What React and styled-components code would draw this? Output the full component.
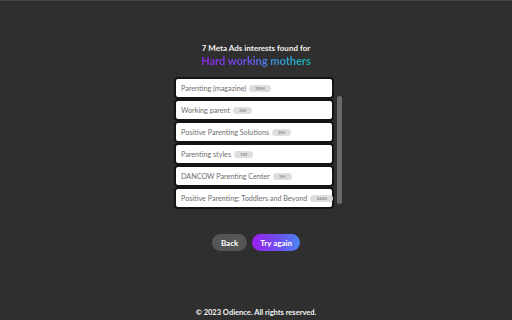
import React from 'react';
import styled, { createGlobalStyle } from 'styled-components';

const GlobalStyle = createGlobalStyle`
  html, body {
    margin: 0;
    padding: 0;
    background: #2f2f2f;
  }
  body {
    font-family: 'Lato', 'Liberation Sans', sans-serif;
  }
`;

const Page = styled.div`
  height: 320px;
  display: flex;
  flex-direction: column;
  align-items: center;
  border-top: 1px solid #454545;
  box-sizing: border-box;
`;

const Content = styled.main`
  flex: 1;
  display: flex;
  flex-direction: column;
  align-items: center;
  padding-top: 42px;
`;

const Subtitle = styled.div`
  color: #f2f2f2;
  font-size: 8px;
  font-weight: 700;
  line-height: 10px;
`;

const Title = styled.h1`
  margin: 0;
  font-size: 11px;
  line-height: 15px;
  font-weight: 700;
  background: linear-gradient(90deg, #8c22e6 0%, #6a4ce8 40%, #3f8ee0 65%, #17b9b0 100%);
  -webkit-background-clip: text;
  background-clip: text;
  color: transparent;
`;

const ListArea = styled.div`
  display: flex;
  margin: 9px 0 0 6px;
  height: 132px;
`;

const List = styled.ul`
  list-style: none;
  margin: 0;
  padding: 0;
  width: 160px;
  overflow: hidden;
  display: flex;
  flex-direction: column;
`;

const Track = styled.div`
  width: 10px;
  display: flex;
  flex-direction: column;
  align-items: flex-end;
  padding-top: 19px;
  box-sizing: border-box;
`;

const Thumb = styled.div`
  width: 5px;
  height: 108px;
  margin-right: 2px;
  border-radius: 3px;
  background: #6a6a6a;
`;

const Item = styled.li`
  flex: none;
  height: 22px;
  box-sizing: border-box;
  border: 2px solid #141414;
  border-radius: 4px;
  background: #ffffff;
  display: flex;
  align-items: center;
  gap: 3px;
  padding: 0 5px;
  color: #6e6e6e;
  font-size: 7.2px;
  white-space: nowrap;
`;

const Badge = styled.span`
  flex: none;
  background: #dedede;
  color: #8a8a8a;
  border-radius: 4px;
  font-size: 4.5px;
  font-weight: 700;
  line-height: 7px;
  padding: 0 6px;
`;

const Actions = styled.div`
  display: flex;
  gap: 5px;
  margin-top: 25px;
`;

const Button = styled.button`
  border: none;
  border-radius: 9px;
  height: 17px;
  padding: 0 ${({ primary }) => (primary ? '8px' : '9px')};
  font-family: 'Lato', 'Liberation Sans', sans-serif;
  font-size: 8px;
  font-weight: 700;
  color: #ffffff;
  background: ${({ primary }) => (primary
    ? 'linear-gradient(90deg, #9a1ff0 0%, #6d4ef2 55%, #4b86f0 100%)'
    : '#555555')};
`;

const Footer = styled.footer`
  color: #f5f5f5;
  font-size: 7.5px;
  font-weight: 700;
  line-height: 10px;
  padding-bottom: 2px;
`;

const interests = [
  { name: 'Parenting (magazine)', size: '29M' },
  { name: 'Working parent', size: '3M' },
  { name: 'Positive Parenting Solutions', size: '2M' },
  { name: 'Parenting styles', size: '1M' },
  { name: 'DANCOW Parenting Center', size: '1M' },
  { name: 'Positive Parenting: Toddlers and Beyond', size: '344K' },
];

const App = () => (
  <>
    <GlobalStyle />
    <Page>
      <Content>
        <Subtitle>7 Meta Ads interests found for</Subtitle>
        <Title>Hard working mothers</Title>
        <ListArea>
          <List>
            {interests.map((interest) => (
              <Item key={interest.name}>
                {interest.name}
                <Badge>{interest.size}</Badge>
              </Item>
            ))}
          </List>
          <Track>
            <Thumb />
          </Track>
        </ListArea>
        <Actions>
          <Button type="button">Back</Button>
          <Button type="button" primary>Try again</Button>
        </Actions>
      </Content>
      <Footer>© 2023 Odience. All rights reserved.</Footer>
    </Page>
  </>
);

export default App;
